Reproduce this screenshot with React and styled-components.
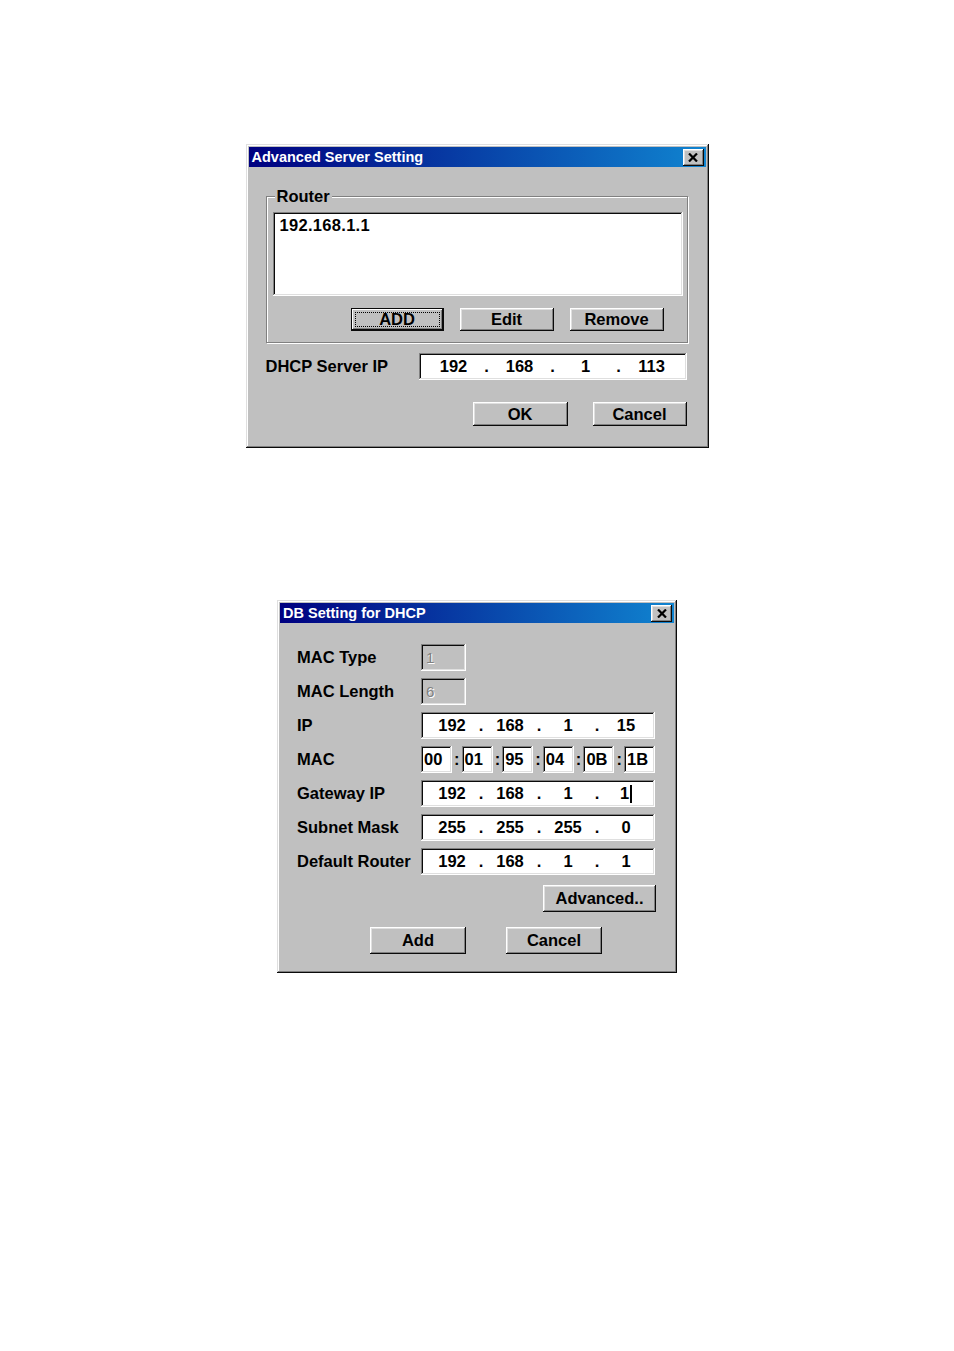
import styled, { createGlobalStyle } from "styled-components";

const GlobalStyle = createGlobalStyle`
  body {
    margin: 0;
    background: #fff;
    font-family: "Liberation Sans", Arial, sans-serif;
  }
`;

const Page = styled.div`
  display: flex;
  flex-direction: column;
  align-items: center;
  padding-top: 144px;
  gap: 152px;
`;

const Window = styled.div`
  box-sizing: border-box;
  width: ${(p) => p.$width}px;
  padding: 3px;
  background: #c0c0c0;
  box-shadow: inset -1px -1px #0a0a0a, inset 1px 1px #dfdfdf,
    inset -2px -2px #808080, inset 2px 2px #fff;
  color: #000;
  font-size: 16.5px;
  font-weight: bold;
`;

const TitleBar = styled.div`
  height: 20px;
  display: flex;
  align-items: center;
  justify-content: space-between;
  padding: 0 2px 0 3px;
  background: linear-gradient(90deg, #000080, #1084d0);
  color: #fff;
  font-size: 14.5px;
  font-weight: bold;
`;

const CloseButton = styled.div`
  width: 21px;
  height: 17px;
  display: flex;
  align-items: center;
  justify-content: center;
  background: #c0c0c0;
  box-shadow: inset -1px -1px #0a0a0a, inset 1px 1px #fff,
    inset -2px -2px #808080, inset 2px 2px #dfdfdf;
`;

const Body = styled.div`
  padding: ${(p) => p.$padding};
`;

const GroupBox = styled.div`
  position: relative;
  margin-top: 29px;
  border: 1px solid #808080;
  box-shadow: inset 1px 1px #fff, 1px 1px #fff;
  padding: 15px 4px 11px 6px;
`;

const Legend = styled.span`
  position: absolute;
  top: -11px;
  left: 8px;
  padding: 0 2px;
  background: #c0c0c0;
  line-height: 20px;
`;

const Sunken = styled.div`
  box-sizing: border-box;
  background: ${(p) => (p.$disabled ? "#c0c0c0" : "#fff")};
  box-shadow: inset -1px -1px #fff, inset 1px 1px #808080,
    inset -2px -2px #dfdfdf, inset 2px 2px #0a0a0a;
`;

const ListBox = styled(Sunken)`
  height: 84px;
  padding: 3px 7px;
  line-height: 20px;
  letter-spacing: 0.3px;
`;

const ButtonRow = styled.div`
  display: flex;
  justify-content: ${(p) => p.$justify || "flex-end"};
  gap: ${(p) => p.$gap}px;
  margin: ${(p) => p.$margin};
`;

const Button = styled.button`
  box-sizing: border-box;
  width: ${(p) => p.$width}px;
  height: ${(p) => p.$height}px;
  padding: 0;
  border: none;
  background: #c0c0c0;
  font: inherit;
  color: #000;
  box-shadow: ${(p) =>
    p.$default
      ? "inset 0 0 0 1px #0a0a0a, inset -2px -2px #0a0a0a, inset 2px 2px #fff, inset -3px -3px #808080"
      : "inset -1px -1px #0a0a0a, inset 1px 1px #fff, inset -2px -2px #808080, inset 2px 2px #dfdfdf"};
  outline: ${(p) => (p.$default ? "1px dotted #000" : "none")};
  outline-offset: -5px;
`;

const Row = styled.div`
  display: flex;
  align-items: center;
  margin-top: ${(p) => p.$top}px;
`;

const Label = styled.span`
  width: ${(p) => p.$width}px;
  flex-shrink: 0;
`;

const IpBox = styled(Sunken)`
  width: ${(p) => p.$width}px;
  height: 27px;
  display: flex;
  align-items: center;
  padding-left: 6px;
`;

const Octet = styled.span`
  width: ${(p) => p.$cell}px;
  display: inline-flex;
  justify-content: center;
  align-items: center;
`;

const Dot = styled.span`
  width: 8px;
  text-align: center;
`;

const Caret = styled.span`
  display: inline-block;
  width: 2px;
  height: 18px;
  margin-left: 1px;
  background: #000;
`;

const Form = styled.div`
  display: grid;
  grid-template-columns: 124px 234px;
  grid-auto-rows: 27px;
  row-gap: 7px;
  align-items: center;
  margin-top: 21px;
`;

const SmallBox = styled(Sunken)`
  width: 45px;
  height: 27px;
  padding-left: 5px;
  display: flex;
  align-items: center;
  font-weight: normal;
  font-size: 15px;
  color: #808080;
  text-shadow: 1px 1px #fff;
`;

const MacRow = styled.div`
  display: flex;
  align-items: center;
  justify-content: space-between;
  height: 27px;
`;

const MacBox = styled(Sunken)`
  width: 31px;
  height: 27px;
  padding-left: 3px;
  display: flex;
  align-items: center;
`;

function CloseGlyph() {
  return (
    <CloseButton>
      <svg width="10" height="9" viewBox="0 0 10 9">
        <path d="M1 0.5 L9 8.5 M9 0.5 L1 8.5" stroke="#000" strokeWidth="2.2" />
      </svg>
    </CloseButton>
  );
}

function IpField({ parts, width, cell, caret }) {
  return (
    <IpBox $width={width}>
      {parts.map((p, i) => (
        <span key={i} style={{ display: "contents" }}>
          {i > 0 && <Dot>.</Dot>}
          <Octet $cell={cell}>
            {p}
            {caret && i === parts.length - 1 && <Caret />}
          </Octet>
        </span>
      ))}
    </IpBox>
  );
}

function AdvancedServerSetting() {
  return (
    <Window $width={463}>
      <TitleBar>
        <span>Advanced Server Setting</span>
        <CloseGlyph />
      </TitleBar>
      <Body $padding="0 18px 19px 17px">
        <GroupBox>
          <Legend>Router</Legend>
          <ListBox>192.168.1.1</ListBox>
          <ButtonRow $gap={16} $margin="12px 19px 0 0">
            <Button $width={93} $height={23} $default>
              ADD
            </Button>
            <Button $width={94} $height={23}>Edit</Button>
            <Button $width={94} $height={23}>Remove</Button>
          </ButtonRow>
        </GroupBox>
        <Row $top={10}>
          <Label $width={153}>DHCP Server IP</Label>
          <IpField parts={["192", "168", "1", "113"]} width={268} cell={58} />
        </Row>
        <ButtonRow $gap={25} $margin="22px 1px 0 0">
          <Button $width={95} $height={24}>OK</Button>
          <Button $width={94} $height={24}>Cancel</Button>
        </ButtonRow>
      </Body>
    </Window>
  );
}

const mac = ["00", "01", "95", "04", "0B", "1B"];

function DbSetting() {
  return (
    <Window $width={400}>
      <TitleBar>
        <span>DB Setting for DHCP</span>
        <CloseGlyph />
      </TitleBar>
      <Body $padding="0 18px 16px 17px">
        <Form>
          <span>MAC Type</span>
          <SmallBox $disabled>1</SmallBox>
          <span>MAC Length</span>
          <SmallBox $disabled>6</SmallBox>
          <span>IP</span>
          <IpField parts={["192", "168", "1", "15"]} width={234} cell={50} />
          <span>MAC</span>
          <MacRow>
            {mac.map((m, i) => (
              <span key={m} style={{ display: "contents" }}>
                {i > 0 && <span>:</span>}
                <MacBox>{m}</MacBox>
              </span>
            ))}
          </MacRow>
          <span>Gateway IP</span>
          <IpField parts={["192", "168", "1", "1"]} width={234} cell={50} caret />
          <span>Subnet Mask</span>
          <IpField parts={["255", "255", "255", "0"]} width={234} cell={50} />
          <span>Default Router</span>
          <IpField parts={["192", "168", "1", "1"]} width={234} cell={50} />
        </Form>
        <ButtonRow $gap={0} $margin="10px 0 0 0">
          <Button $width={113} $height={27}>Advanced..</Button>
        </ButtonRow>
        <ButtonRow $gap={40} $margin="15px 0 0 73px" $justify="flex-start">
          <Button $width={96} $height={27}>Add</Button>
          <Button $width={96} $height={27}>Cancel</Button>
        </ButtonRow>
      </Body>
    </Window>
  );
}

export default function App() {
  return (
    <>
      <GlobalStyle />
      <Page>
        <AdvancedServerSetting />
        <DbSetting />
      </Page>
    </>
  );
}
